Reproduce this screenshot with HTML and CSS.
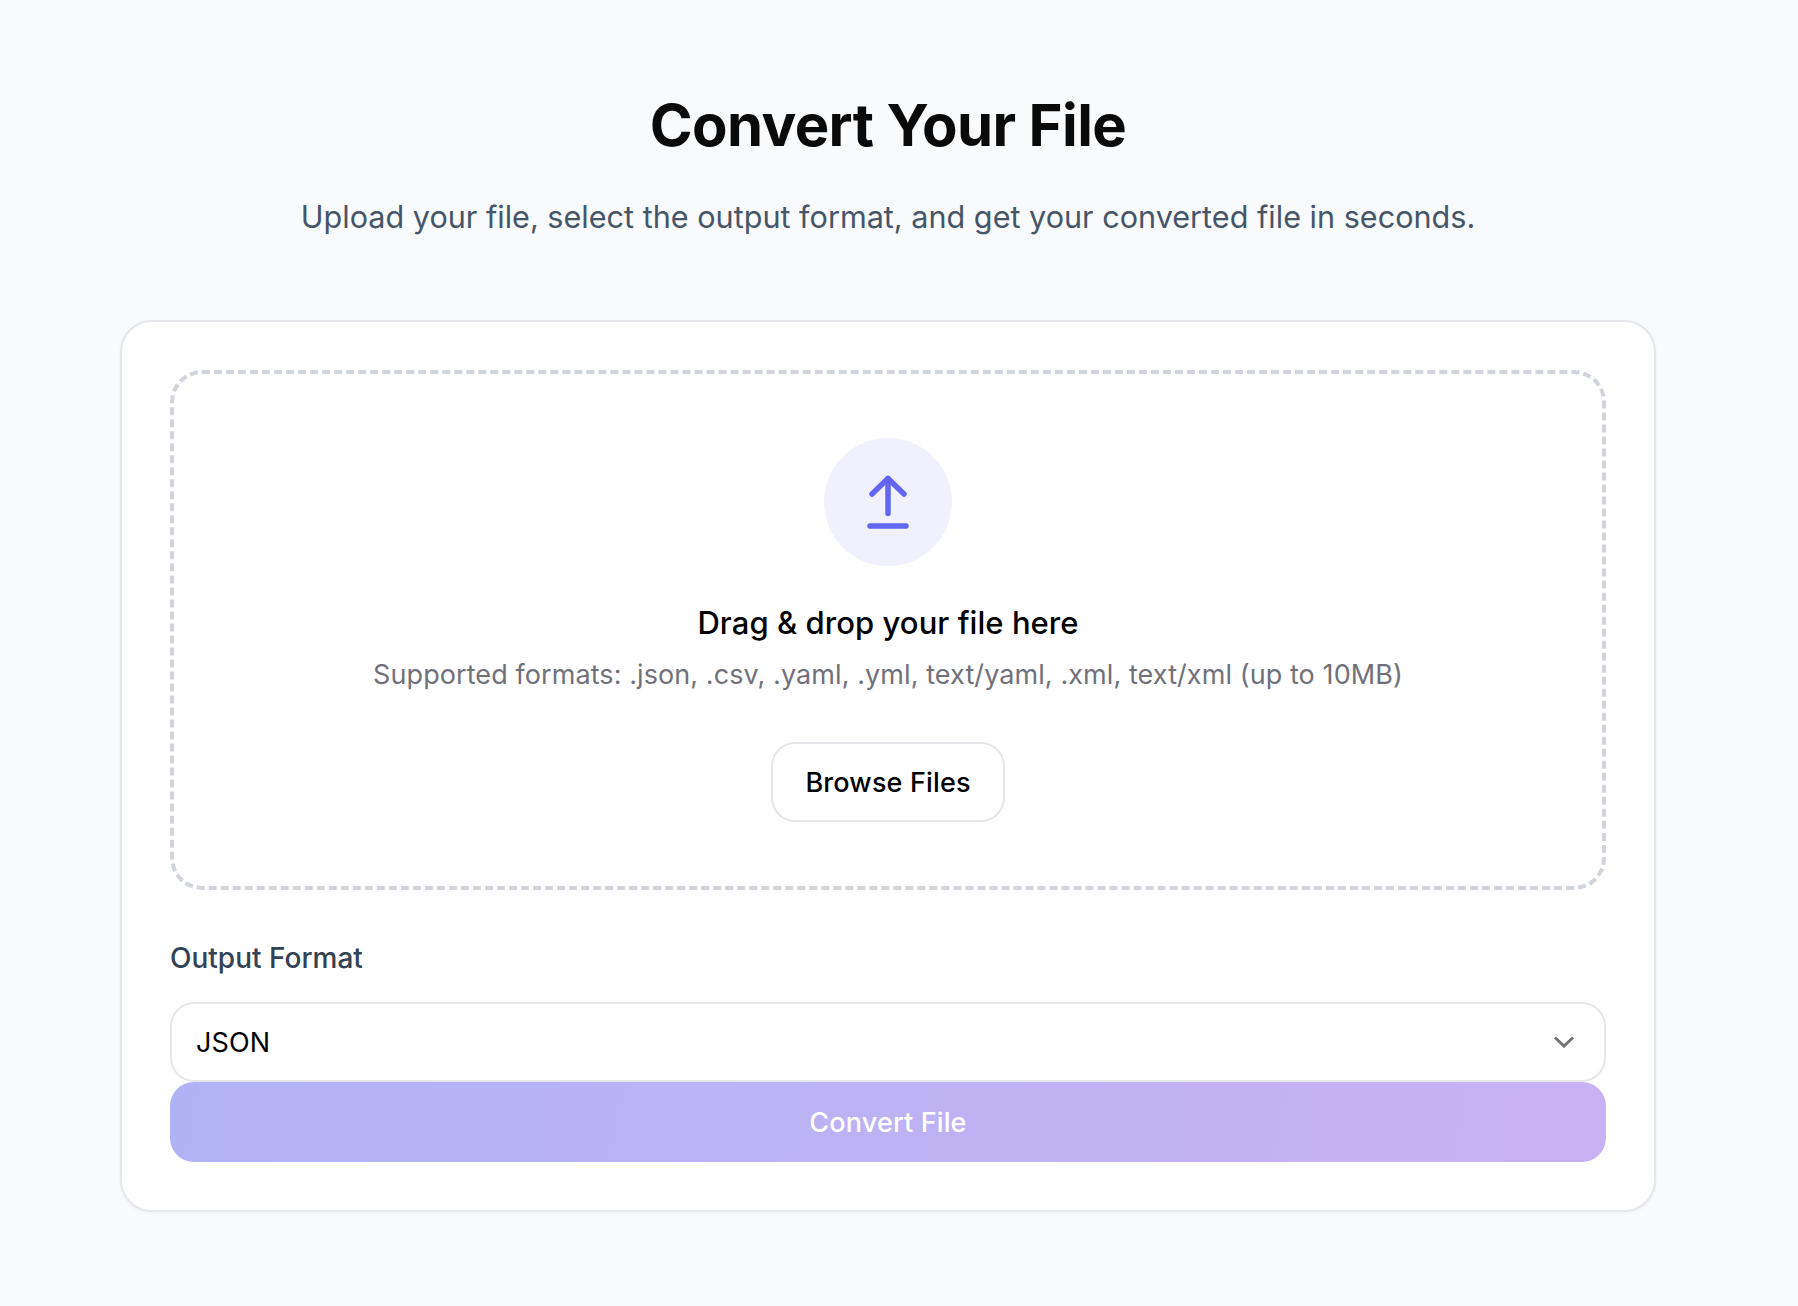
FILE: index.html
```html
<!DOCTYPE html>
<html lang="en">
<head>
    <meta charset="UTF-8">
    <meta name="viewport" content="width=device-width, initial-scale=1.0">
    <title>Convert Your File</title>
    <link rel="stylesheet" href="styles.css">
</head>
<body>
    <div class="container">
        <h1>Convert Your File</h1>
        <p class="subtitle">Upload your file, select the output format, and get your converted file in seconds.</p>

        <div class="card">
            <div class="dropzone">
                <div class="upload-icon">
                    <svg width="48" height="60" viewBox="0 0 48 60" fill="none" stroke="#6366f1" stroke-width="5.5" stroke-linecap="round" stroke-linejoin="round">
                        <path d="M24 41.5V6.5"/>
                        <path d="M8 22L24 6.5L40 22"/>
                        <path d="M6 54H42"/>
                    </svg>
                </div>
                <h3>Drag &amp; drop your file here</h3>
                <p class="formats">Supported formats: .json, .csv, .yaml, .yml, text/yaml, .xml, text/xml (up to 10MB)</p>
                <button type="button" class="browse-btn">Browse Files</button>
            </div>

            <label class="field-label">Output Format</label>
            <div class="select-box">
                <span>JSON</span>
                <svg width="20" height="12" viewBox="0 0 20 12" fill="none" stroke="#737373" stroke-width="3">
                    <path d="M1 1.5L10 10L19 1.5"/>
                </svg>
            </div>
            <button type="button" class="convert-btn">Convert File</button>
        </div>
    </div>
</body>
</html>
```

FILE: styles.css
```css
body {
    margin: 0;
    background: #f9fafb;
    font-family: Inter, 'Noto Sans', sans-serif;
    color: #000;
}
.container {
    width: 1536px;
    margin: 0 0 0 120px;
    padding: 92px 0 96px;
    text-align: center;
}
h1 {
    margin: 0;
    font-size: 58px;
    line-height: 66px;
    font-weight: 700;
    letter-spacing: -0.6px;
    color: #0a0a0a;
}
.subtitle {
    margin: 39px 0 0;
    font-size: 30.6px;
    line-height: 40px;
    color: #475569;
}
.card {
    margin-top: 83px;
    padding: 48px;
    background: #fff;
    border: 2px solid #e5e7eb;
    border-radius: 32px;
    text-align: left;
    box-shadow: 0 1px 3px rgba(0,0,0,0.05);
}
.dropzone {
    display: flex;
    flex-direction: column;
    align-items: center;
    height: 520px;
    padding-top: 64px;
    box-sizing: border-box;
    border: 4px dashed #d1d5db;
    border-radius: 32px;
}
.upload-icon {
    display: flex;
    align-items: center;
    justify-content: center;
    width: 128px;
    height: 128px;
    border-radius: 50%;
    background: #f0f0fe;
}
.dropzone h3 {
    margin: 37px 0 0;
    font-size: 31px;
    line-height: 40px;
    font-weight: 500;
    letter-spacing: 0.05px;
}
.formats {
    margin: 14px 0 0;
    font-size: 27px;
    line-height: 36px;
    letter-spacing: 0.08px;
    color: #71717a;
}
.browse-btn {
    margin-top: 49px;
    width: 234px;
    height: 80px;
    background: #fff;
    border: 2px solid #e5e7eb;
    border-radius: 24px;
    font: 500 27px Inter, sans-serif;
    letter-spacing: 0.15px;
    color: #000;
}
.field-label {
    display: block;
    margin-top: 50px;
    font-size: 28px;
    line-height: 36px;
    font-weight: 500;
    color: #334155;
}
.select-box {
    display: flex;
    align-items: center;
    justify-content: space-between;
    margin-top: 26px;
    height: 80px;
    padding: 0 30px 0 24px;
    box-sizing: border-box;
    border: 2px solid #e5e7eb;
    border-radius: 24px;
    font-size: 27px;
    letter-spacing: 0.15px;
}
.convert-btn {
    display: block;
    width: 100%;
    height: 80px;
    border: none;
    border-radius: 24px;
    background: linear-gradient(100deg, #b1b2f4, #c9b2f3);
    font: 500 27px Inter, sans-serif;
    letter-spacing: 0.15px;
    color: #fff;
}
```
